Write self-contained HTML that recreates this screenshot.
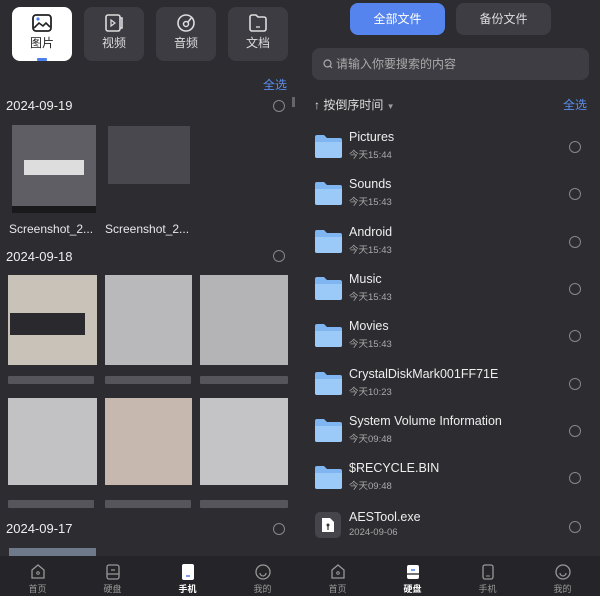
<!DOCTYPE html>
<html><head><meta charset="utf-8"><style>
*{margin:0;padding:0;box-sizing:border-box}
body{width:600px;height:596px;background:#2c2c31;font-family:"Liberation Sans","Noto Sans CJK SC",sans-serif;color:#e8e8ea;position:relative;overflow:hidden}
.a{position:absolute}
.tab{position:absolute;top:7px;width:60px;height:54px;border-radius:8px;background:#3c3c42;text-align:center;font-size:12px;color:#ddd}
.tab svg{display:block;margin:7px auto 2px}
.date{position:absolute;left:6px;font-size:13px;color:#eee}
.circ{position:absolute;width:12px;height:12px;border:1.3px solid #888;border-radius:50%}
.th{position:absolute;background:#6a6a70}
.blur{position:absolute;height:8px;background:#55555b;border-radius:1px}
.row{position:absolute;left:300px;width:300px;height:47px}
.row .nm{position:absolute;left:49px;top:3px;font-size:12.5px;color:#eee}
.row .tm{position:absolute;left:49px;top:20px;font-size:9.5px;color:#aaa}
.row .circ{left:269px;top:14px}
.fold{position:absolute;left:15px;top:8px}
.nav{position:absolute;top:556px;height:40px;width:75px;text-align:center;font-size:9px;color:#999}
.nav svg{display:block;margin:8px auto 2px}
</style></head><body>
<div class="tab" style="left:12px;background:#fff;color:#222">
<svg width="20" height="18" viewBox="0 0 20 18"><rect x="1" y="1" width="18" height="16" rx="3" fill="none" stroke="#222" stroke-width="1.8"/><circle cx="6" cy="5" r="1.6" fill="#4a7ff0"/><path d="M2 14 L7 9 L11 12 L14 9 L18 13" fill="none" stroke="#222" stroke-width="1.6"/></svg>图片
<div class="a" style="left:25px;top:51px;width:10px;height:3px;background:#4a7ff0;border-radius:1px"></div></div>
<div class="tab" style="left:84px"><svg width="20" height="18" viewBox="0 0 20 18"><rect x="2" y="1" width="14" height="16" rx="2" fill="none" stroke="#ddd" stroke-width="1.6"/><path d="M16 4h2v10h-2" fill="none" stroke="#ddd" stroke-width="1.6"/><path d="M7 6l4 3-4 3z" fill="none" stroke="#ddd" stroke-width="1.2"/></svg>视频</div>
<div class="tab" style="left:156px"><svg width="20" height="18" viewBox="0 0 20 18"><circle cx="10" cy="9" r="8" fill="none" stroke="#ddd" stroke-width="1.6"/><circle cx="10" cy="10" r="2.5" fill="none" stroke="#ddd" stroke-width="1.5"/><path d="M12 8 L16 3" stroke="#ddd" stroke-width="1.6"/></svg>音频</div>
<div class="tab" style="left:228px"><svg width="20" height="18" viewBox="0 0 20 18"><path d="M2 3a2 2 0 012-2h4l2 2h6a2 2 0 012 2v10a2 2 0 01-2 2H4a2 2 0 01-2-2z" fill="none" stroke="#ddd" stroke-width="1.6"/><path d="M8 13h4" stroke="#ddd" stroke-width="1.3"/></svg>文档</div>
<div class="a" style="left:263px;top:76px;font-size:12px;color:#5b8ff0">全选</div>
<div class="a" style="left:292px;top:97px;width:3px;height:10px;background:#666"></div>
<div class="date" style="top:98px">2024-09-19</div><div class="circ" style="left:273px;top:100px"></div>
<div class="th" style="left:12px;top:125px;width:84px;height:88px;background:#5e5e64"></div>
<div class="th" style="left:24px;top:160px;width:60px;height:15px;background:#ddd"></div>
<div class="th" style="left:12px;top:206px;width:84px;height:7px;background:#1a1a1c"></div>
<div class="th" style="left:108px;top:126px;width:82px;height:58px;background:#48484e"></div>
<div class="a" style="left:9px;top:222px;font-size:12px">Screenshot_2...</div>
<div class="a" style="left:105px;top:222px;font-size:12px">Screenshot_2...</div>
<div class="date" style="top:249px">2024-09-18</div><div class="circ" style="left:273px;top:250px"></div>
<div class="th" style="left:8px;top:275px;width:89px;height:90px;background:#c8c2b8"></div>
<div class="th" style="left:10px;top:313px;width:75px;height:22px;background:#2a2a2e"></div>
<div class="th" style="left:105px;top:275px;width:87px;height:90px;background:#b9b9bb"></div>
<div class="th" style="left:200px;top:275px;width:88px;height:90px;background:#b4b4b6"></div>
<div class="blur" style="left:8px;top:376px;width:86px"></div><div class="blur" style="left:105px;top:376px;width:86px"></div><div class="blur" style="left:200px;top:376px;width:88px"></div>
<div class="th" style="left:8px;top:398px;width:89px;height:87px;background:#c2c2c4"></div>
<div class="th" style="left:105px;top:398px;width:87px;height:87px;background:#c6b8ae"></div>
<div class="th" style="left:200px;top:398px;width:88px;height:87px;background:#c4c4c6"></div>
<div class="blur" style="left:8px;top:500px;width:86px"></div><div class="blur" style="left:105px;top:500px;width:86px"></div><div class="blur" style="left:200px;top:500px;width:88px"></div>
<div class="date" style="top:521px">2024-09-17</div><div class="circ" style="left:273px;top:523px"></div>
<div class="th" style="left:9px;top:548px;width:87px;height:8px;background:#6e7a8a"></div>
<div class="a" style="left:350px;top:3px;width:95px;height:32px;border-radius:8px;background:#5584ee;color:#fff;font-size:12px;text-align:center;line-height:32px">全部文件</div>
<div class="a" style="left:456px;top:3px;width:95px;height:32px;border-radius:8px;background:#3d3d43;color:#ddd;font-size:12px;text-align:center;line-height:32px">备份文件</div>
<div class="a" style="left:312px;top:48px;width:277px;height:32px;border-radius:8px;background:#3d3d43;color:#aaa;font-size:12px;line-height:32px;padding-left:24px">请输入你要搜索的内容
<svg class="a" style="left:11px;top:11px" width="10" height="10" viewBox="0 0 10 10"><circle cx="4.5" cy="4.5" r="3.5" fill="none" stroke="#aaa" stroke-width="1.2"/><path d="M7 7l2 2" stroke="#aaa" stroke-width="1.2"/></svg></div>
<div class="a" style="left:314px;top:96px;font-size:12px;color:#ddd">↑ 按倒序时间 <span style="font-size:8px;color:#999">▼</span></div>
<div class="a" style="left:563px;top:96px;font-size:12px;color:#5b8ff0">全选</div>
<div id="rows"></div>
<script>
var d=[["Pictures","今天15:44"],["Sounds","今天15:43"],["Android","今天15:43"],["Music","今天15:43"],["Movies","今天15:43"],["CrystalDiskMark001FF71E","今天10:23"],["System Volume Information","今天09:48"],["$RECYCLE.BIN","今天09:48"]];
var h="";d.forEach(function(r,i){var t=127+i*47.3;h+='<div class="row" style="top:'+t+'px"><svg class="fold" width="27" height="23" viewBox="0 0 27 23"><path d="M0 2a2 2 0 012-2h7l3 3h13a2 2 0 012 2v16a2 2 0 01-2 2H2a2 2 0 01-2-2z" fill="#7fb6f2"/><path d="M0 7h27v14a2 2 0 01-2 2H2a2 2 0 01-2-2z" fill="#9ccaf8"/></svg><div class="nm">'+r[0]+'</div><div class="tm">'+r[1]+'</div><div class="circ"></div></div>'});
h+='<div class="row" style="top:507px"><div class="a" style="left:15px;top:5px;width:26px;height:26px;border-radius:5px;background:#45454b"></div><svg class="a" style="left:21px;top:10px" width="14" height="16" viewBox="0 0 14 16"><path d="M1 1h8l4 4v10H1z" fill="#fff"/><circle cx="7" cy="8" r="1.5" fill="#333"/><path d="M7 9v4" stroke="#333" stroke-width="1.2"/></svg><div class="nm">AESTool.exe</div><div class="tm">2024-09-06</div><div class="circ"></div></div>';
document.getElementById("rows").innerHTML=h;
</script>
<div class="a" style="left:0;top:556px;width:600px;height:40px;background:#252529"></div>
<div class="nav" style="left:0"><svg width="16" height="16" viewBox="0 0 16 16"><path d="M2 6l6-5 6 5v8H2z" fill="none" stroke="#999" stroke-width="1.3"/><circle cx="8" cy="9" r="1.3" fill="none" stroke="#999"/></svg>首页</div>
<div class="nav" style="left:75px"><svg width="16" height="16" viewBox="0 0 16 16"><rect x="2" y="1" width="12" height="14" rx="2" fill="none" stroke="#999" stroke-width="1.3"/><path d="M2 10h12M6 6h4" stroke="#999" stroke-width="1.2"/></svg>硬盘</div>
<div class="nav" style="left:150px;color:#fff;font-weight:bold"><svg width="16" height="16" viewBox="0 0 16 16"><rect x="2" y="0" width="12" height="16" rx="2" fill="#fff"/><path d="M6 12h4" stroke="#4a7ff0" stroke-width="1.5"/></svg>手机</div>
<div class="nav" style="left:225px"><svg width="16" height="16" viewBox="0 0 16 16"><circle cx="8" cy="8" r="7" fill="none" stroke="#999" stroke-width="1.3"/><path d="M5 9a3 3 0 006 0" fill="none" stroke="#999" stroke-width="1.2"/></svg>我的</div>
<div class="nav" style="left:300px"><svg width="16" height="16" viewBox="0 0 16 16"><path d="M2 6l6-5 6 5v8H2z" fill="none" stroke="#999" stroke-width="1.3"/><circle cx="8" cy="9" r="1.3" fill="none" stroke="#999"/></svg>首页</div>
<div class="nav" style="left:375px;color:#fff;font-weight:bold"><svg width="16" height="16" viewBox="0 0 16 16"><rect x="2" y="1" width="12" height="14" rx="2" fill="#fff"/><path d="M2 10h12" stroke="#252529" stroke-width="1.3"/><path d="M6 6h4" stroke="#4a7ff0" stroke-width="1.5"/></svg>硬盘</div>
<div class="nav" style="left:450px"><svg width="16" height="16" viewBox="0 0 16 16"><rect x="3" y="1" width="10" height="14" rx="2" fill="none" stroke="#999" stroke-width="1.3"/><path d="M6 12h4" stroke="#999"/></svg>手机</div>
<div class="nav" style="left:525px"><svg width="16" height="16" viewBox="0 0 16 16"><circle cx="8" cy="8" r="7" fill="none" stroke="#999" stroke-width="1.3"/><path d="M5 9a3 3 0 006 0" fill="none" stroke="#999" stroke-width="1.2"/></svg>我的</div>
</body></html>
